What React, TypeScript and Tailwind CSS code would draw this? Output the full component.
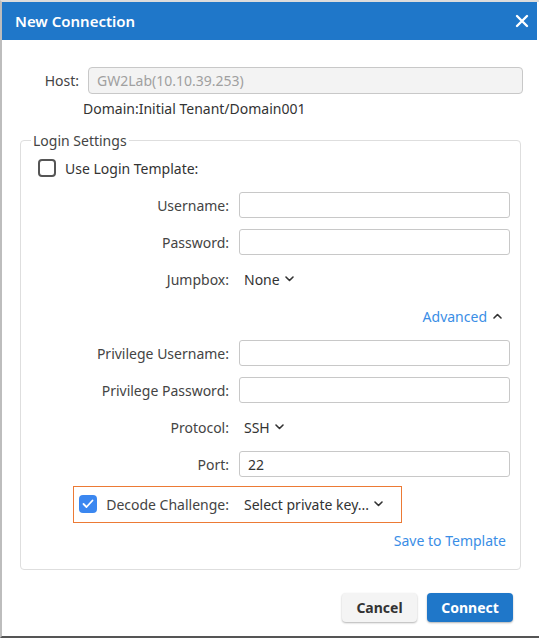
import React from "react";

const Chevron = ({ up = false }: { up?: boolean }) => (
  <svg width="9" height="6" viewBox="0 0 9 6" className="inline-block" aria-hidden>
    <path
      d={up ? "M1 5 L4.5 1.5 L8 5" : "M1 1 L4.5 4.5 L8 1"}
      fill="none"
      stroke="#333"
      strokeWidth="1.6"
      strokeLinecap="round"
      strokeLinejoin="round"
    />
  </svg>
);

const Label = ({ children }: { children: React.ReactNode }) => (
  <div className="flex items-center justify-end text-[#444]">{children}</div>
);

const Input = ({ value }: { value?: string }) => (
  <div className="h-[26px] rounded-[3px] border border-[#c8c8c8] bg-white px-2 flex items-center text-[#333]">
    {value}
  </div>
);

export default function App() {
  return (
    <div
      className="w-[539px] h-[638px] bg-white text-[14px] leading-[19px] overflow-hidden"
      style={{ fontFamily: '"Noto Sans", "Open Sans", sans-serif' }}
    >
      <div className="w-[539px] h-[638px] border-t-2 border-t-[#dcdcdc] border-l-2 border-l-[#bdbdbd] border-b-2 border-b-[#555] flex flex-col">
        {/* Header */}
        <div className="h-[38px] bg-[#1f77c9] flex items-center justify-between pl-[13px] pr-[8px] mr-[2px]">
          <span className="text-white font-semibold text-[15px]">New Connection</span>
          <svg width="14" height="14" viewBox="0 0 14 14" aria-hidden>
            <path d="M2 2 L12 12 M12 2 L2 12" stroke="white" strokeWidth="2.4" strokeLinecap="round" />
          </svg>
        </div>

        {/* Host */}
        <div className="mt-[27px] flex items-center pr-[16px]">
          <div className="w-[77px] text-right text-[#444]">Host:</div>
          <div className="ml-[9px] flex-1 h-[27px] rounded-[4px] border border-[#c8c8c8] bg-[#f3f3f3] px-2 flex items-center text-[#a0a0a0]">
            GW2Lab(10.10.39.253)
          </div>
        </div>
        <div className="mt-[5px] ml-[81px] text-[#333]">Domain:Initial Tenant/Domain001</div>

        {/* Login settings */}
        <fieldset className="mt-[13px] mx-[18px] border border-[#dedede] rounded-[4px] pb-[16px] pr-[10px]">
          <legend className="ml-[10px] px-[2px] text-[#444]">Login Settings</legend>

          <div className="flex items-center gap-[9px] ml-[17px] mt-[5px] h-[26px] text-[#333]">
            <div className="w-[18px] h-[18px] rounded-[4px] border-2 border-[#555] bg-white" />
            <span>Use Login Template:</span>
          </div>

          <div className="grid grid-cols-[208px_1fr] gap-x-[10px] gap-y-[11px] mt-[11px] items-center">
            <Label>Username:</Label>
            <Input />
            <Label>Password:</Label>
            <Input />
            <Label>Jumpbox:</Label>
            <div className="h-[26px] flex items-center gap-[5px] pl-[5px] text-[#333]">
              None <Chevron />
            </div>

            <div className="col-span-2 h-[26px] flex items-center justify-end gap-[6px] pr-[8px]">
              <span className="text-[#3a8ee6]">Advanced</span>
              <Chevron up />
            </div>

            <Label>Privilege Username:</Label>
            <Input />
            <Label>Privilege Password:</Label>
            <Input />
            <Label>Protocol:</Label>
            <div className="h-[26px] flex items-center gap-[5px] pl-[5px] text-[#333]">
              SSH <Chevron />
            </div>
            <Label>Port:</Label>
            <Input value="22" />

            <div className="col-span-2 relative grid grid-cols-[208px_1fr] gap-x-[10px] items-center mt-[3px]">
              <div className="absolute left-[52px] top-[-5px] w-[329px] h-[37px] ring-1 ring-inset ring-[#ec7a35]" />
              <div className="flex items-center justify-end h-[26px]">
                <div className="w-[18px] h-[18px] rounded-[4px] bg-[#3b87f0] flex items-center justify-center mr-[9px]">
                  <svg width="12" height="10" viewBox="0 0 12 10" aria-hidden>
                    <path d="M1.5 5 L4.5 8 L10.5 1.5" fill="none" stroke="white" strokeWidth="1.8" strokeLinecap="round" strokeLinejoin="round" />
                  </svg>
                </div>
                <span className="text-[#444]">Decode Challenge:</span>
              </div>
              <div className="h-[26px] flex items-center gap-[5px] pl-[5px] text-[#333]">
                Select private key... <Chevron />
              </div>
            </div>

            <div className="col-span-2 h-[25px] flex items-center justify-end pr-[4px]">
              <span className="text-[#3a8ee6]">Save to Template</span>
            </div>
          </div>
        </fieldset>

        {/* Buttons */}
        <div className="mt-[23px] flex justify-end gap-[10px] pr-[26px]">
          <button className="w-[75px] h-[29px] rounded-[4px] bg-[#f4f4f4] shadow-[0_1px_2px_rgba(0,0,0,0.3)] font-bold text-[#333]">
            Cancel
          </button>
          <button className="w-[86px] h-[29px] rounded-[4px] bg-[#1f77c9] shadow-[0_1px_2px_rgba(0,0,0,0.3)] font-bold text-white">
            Connect
          </button>
        </div>
      </div>
    </div>
  );
}
